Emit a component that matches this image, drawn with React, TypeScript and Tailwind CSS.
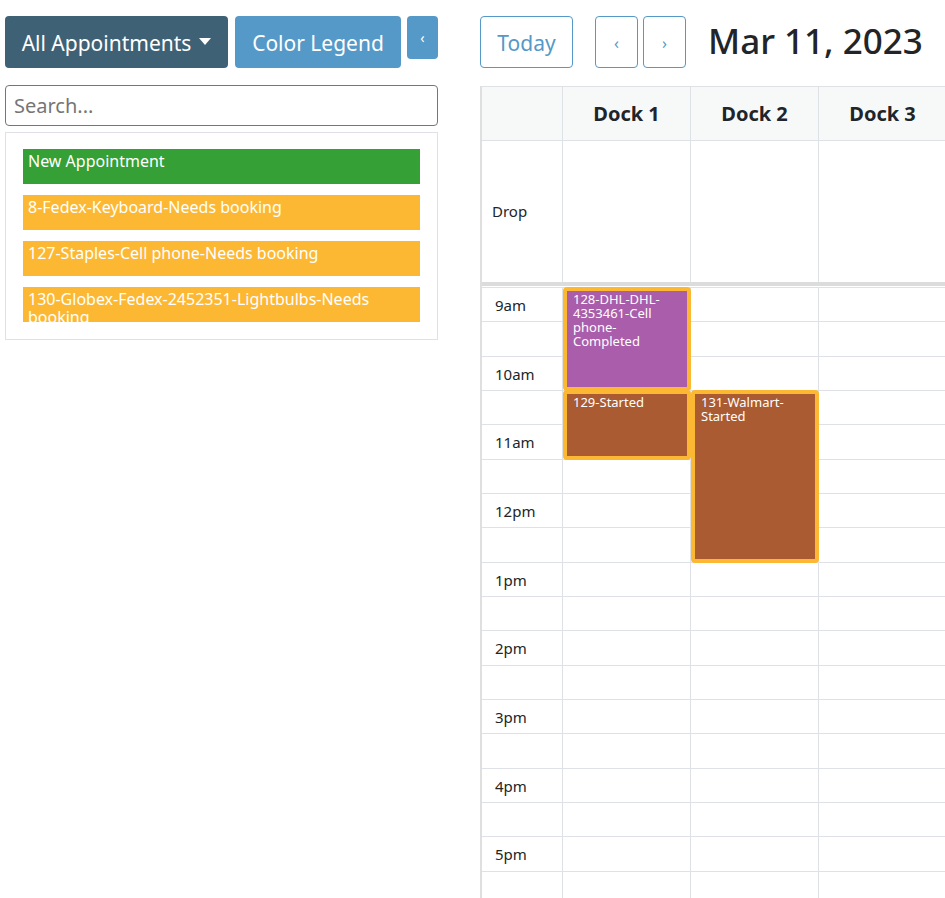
import React from "react";

const font = { fontFamily: '"Noto Sans", "Open Sans", sans-serif' };

const items = [
  { label: "New Appointment", color: "bg-[#35a035]" },
  { label: "8-Fedex-Keyboard-Needs booking", color: "bg-[#fdb833]" },
  { label: "127-Staples-Cell phone-Needs booking", color: "bg-[#fdb833]" },
  { label: "130-Globex-Fedex-2452351-Lightbulbs-Needs booking", color: "bg-[#fdb833]" },
];

const slots = ["9am", "", "10am", "", "11am", "", "12pm", "", "1pm", "", "2pm", "", "3pm", "", "4pm", "", "5pm", ""];

const SLOT = 34.33;

const events = [
  { label: "128-DHL-DHL-4353461-Cell phone-Completed", col: 0, start: 0, len: 3, color: "bg-[#a95daa]" },
  { label: "129-Started", col: 0, start: 3, len: 2, color: "bg-[#aa5b31]" },
  { label: "131-Walmart-Started", col: 1, start: 3, len: 5, color: "bg-[#aa5b31]" },
];

function Sidebar() {
  return (
    <div className="w-[433px] ml-[5px] shrink-0">
      <div className="flex items-start mt-4 gap-[7px]">
        <button className="h-[52px] w-[223px] rounded bg-[#3f6176] text-white text-[21px] pt-[3px] flex items-center justify-center gap-2">
          All Appointments
          <span className="w-0 h-0 border-l-[6px] border-r-[6px] border-t-[7px] border-l-transparent border-r-transparent border-t-white mt-[-4px]" />
        </button>
        <button className="h-[52px] w-[166px] rounded bg-[#5499c7] text-white text-[21px] pt-[3px]">Color Legend</button>
        <button className="h-[43px] w-[31px] ml-[-1px] rounded-sm bg-[#5499c7] text-white text-[14px] leading-none">‹</button>
      </div>
      <input
        className="mt-[17px] w-full h-[41px] border border-[#767676] rounded-sm px-2 text-[20px] placeholder:text-[#757575] outline-none"
        placeholder="Search..."
      />
      <div className="mt-[6px] border border-[#dee2e6] px-[17px] pt-4 pb-[17px] flex flex-col gap-[11px]">
        {items.map((it) => (
          <div key={it.label} className={`${it.color} h-[35px] overflow-hidden px-[5px] pt-[3px] text-white text-[16px] leading-[18px]`}>
            {it.label}
          </div>
        ))}
      </div>
    </div>
  );
}

function NavButton({ children, className }: { children: React.ReactNode; className: string }) {
  return (
    <button className={`h-[52px] border border-[#5499c7] rounded text-[#5499c7] ${className}`}>{children}</button>
  );
}

function Calendar() {
  const docks = ["Dock 1", "Dock 2", "Dock 3"];
  return (
    <div className="ml-[42px] flex-1 min-w-0 overflow-hidden">
      <div className="flex items-center mt-4 h-[52px]">
        <NavButton className="w-[93px] text-[21px] pt-[3px]">Today</NavButton>
        <NavButton className="w-[43px] ml-[22px] text-[16px] pt-[2px]">‹</NavButton>
        <NavButton className="w-[43px] ml-[5px] text-[16px] pt-[2px]">›</NavButton>
        <div className="ml-[22px] text-[35px] text-[#212529] leading-none font-medium whitespace-nowrap mt-[-3px]">Mar 11, 2023</div>
      </div>
      <div className="mt-[18px] w-[470px] border-l-2 border-l-[#dfdfdf] border-t border-t-[#dee2e6] text-[#212529]">
        <div className="flex h-[54px] bg-[#f7f8f8] border-b border-[#dee2e6]">
          <div className="w-[81px] border-r border-[#dee2e6]" />
          {docks.map((d) => (
            <div key={d} className="w-[128px] border-r border-[#dee2e6] flex items-center justify-center font-bold text-[20px]">
              {d}
            </div>
          ))}
        </div>
        <div className="flex h-[141px]">
          <div className="w-[81px] border-r border-[#dee2e6] flex items-center pl-[10px] text-[15px]">Drop</div>
          {docks.map((d) => (
            <div key={d} className="w-[128px] border-r border-[#dee2e6]" />
          ))}
        </div>
        <div className="h-[4px] bg-[#dcdcdc]" />
        <div className="h-[1px]" />
        <div className="relative">
          {slots.map((s, i) => (
            <div key={i} className="flex border-t border-[#dee2e6]" style={{ height: SLOT }}>
              <div className="w-[81px] border-r border-[#dee2e6] pl-[13px] pt-[7px] text-[15px] leading-[20px]">{s}</div>
              {docks.map((d) => (
                <div key={d} className="w-[128px] border-r border-[#dee2e6]" />
              ))}
            </div>
          ))}
          {events.map((e) => (
            <div
              key={e.label}
              className={`absolute ${e.color} border-[4px] border-[#fdb833] rounded-[4px] px-[6px] pt-[1px] text-white text-[13px] leading-[14px] overflow-hidden`}
              style={{ left: 81 + e.col * 128, width: 128, top: e.start * SLOT, height: e.len * SLOT + 1 }}
            >
              {e.label}
            </div>
          ))}
        </div>
      </div>
    </div>
  );
}

export default function App() {
  return (
    <div className="flex bg-white w-[945px] h-[898px] overflow-hidden" style={font}>
      <Sidebar />
      <Calendar />
    </div>
  );
}
